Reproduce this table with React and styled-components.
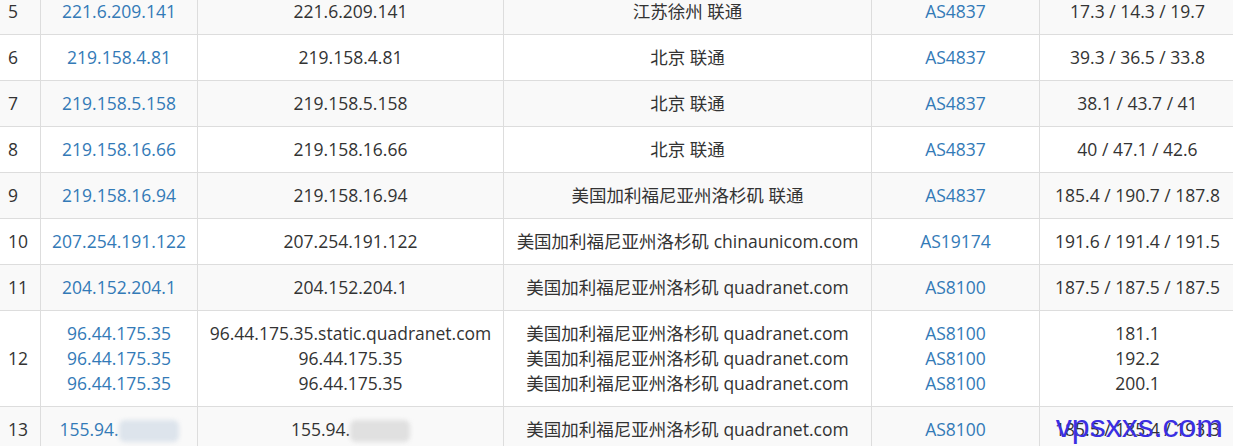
import styled, { createGlobalStyle } from "styled-components";

const GlobalStyle = createGlobalStyle`
  html, body {
    margin: 0;
    padding: 0;
    background: #fff;
    overflow: hidden;
  }
`;

const rows = [
  { no: 5, ip: ["221.6.209.141"], host: ["221.6.209.141"], loc: ["江苏徐州 联通"], as: ["AS4837"], time: ["17.3 / 14.3 / 19.7"] },
  { no: 6, ip: ["219.158.4.81"], host: ["219.158.4.81"], loc: ["北京 联通"], as: ["AS4837"], time: ["39.3 / 36.5 / 33.8"] },
  { no: 7, ip: ["219.158.5.158"], host: ["219.158.5.158"], loc: ["北京 联通"], as: ["AS4837"], time: ["38.1 / 43.7 / 41"] },
  { no: 8, ip: ["219.158.16.66"], host: ["219.158.16.66"], loc: ["北京 联通"], as: ["AS4837"], time: ["40 / 47.1 / 42.6"] },
  { no: 9, ip: ["219.158.16.94"], host: ["219.158.16.94"], loc: ["美国加利福尼亚州洛杉矶 联通"], as: ["AS4837"], time: ["185.4 / 190.7 / 187.8"] },
  { no: 10, ip: ["207.254.191.122"], host: ["207.254.191.122"], loc: ["美国加利福尼亚州洛杉矶 chinaunicom.com"], as: ["AS19174"], time: ["191.6 / 191.4 / 191.5"] },
  { no: 11, ip: ["204.152.204.1"], host: ["204.152.204.1"], loc: ["美国加利福尼亚州洛杉矶 quadranet.com"], as: ["AS8100"], time: ["187.5 / 187.5 / 187.5"] },
  {
    no: 12,
    ip: ["96.44.175.35", "96.44.175.35", "96.44.175.35"],
    host: ["96.44.175.35.static.quadranet.com", "96.44.175.35", "96.44.175.35"],
    loc: ["美国加利福尼亚州洛杉矶 quadranet.com", "美国加利福尼亚州洛杉矶 quadranet.com", "美国加利福尼亚州洛杉矶 quadranet.com"],
    as: ["AS8100", "AS8100", "AS8100"],
    time: ["181.1", "192.2", "200.1"],
  },
  { no: 13, ip: ["155.94."], host: ["155.94."], loc: ["美国加利福尼亚州洛杉矶 quadranet.com"], as: ["AS8100"], time: ["185.5 / 185.4 / 193.3"], masked: true },
];

export default function App() {
  return (
    <Page>
      <GlobalStyle />
      <Table>
        <colgroup>
          <Col $w={41} />
          <Col $w={157} />
          <Col $w={306} />
          <Col $w={368} />
          <Col $w={168} />
          <Col $w={196} />
        </colgroup>
        <tbody>
          {rows.map((r) => (
            <Row key={r.no} $odd={r.no % 2 === 1}>
              <NoCell>{r.no}</NoCell>
              <Cell>
                {r.ip.map((t, i) => (
                  <Line key={i} $link>
                    {t}
                    {r.masked && <Blur $tint="#dde4ec" />}
                  </Line>
                ))}
              </Cell>
              <Cell>
                {r.host.map((t, i) => (
                  <Line key={i}>
                    {t}
                    {r.masked && <Blur $tint="#e0e0e0" />}
                  </Line>
                ))}
              </Cell>
              <Cell>
                {r.loc.map((t, i) => (
                  <Line key={i}>{t}</Line>
                ))}
              </Cell>
              <Cell>
                {r.as.map((t, i) => (
                  <Line key={i} $link>
                    {t}
                  </Line>
                ))}
              </Cell>
              <Cell>
                {r.time.map((t, i) => (
                  <Line key={i}>{t}</Line>
                ))}
              </Cell>
            </Row>
          ))}
        </tbody>
      </Table>
      <Watermark>vpsxxs.com</Watermark>
    </Page>
  );
}

const Page = styled.div`
  position: relative;
  width: 1233px;
  height: 446px;
  overflow: hidden;
  font-family: "Open Sans", "Noto Sans CJK SC", sans-serif;
  font-size: 17.5px;
  color: #333;
`;

const Table = styled.table`
  border-collapse: collapse;
  table-layout: fixed;
  width: 1236px;
  margin: -12px 0 0 -1px;
`;

const Col = styled.col`
  width: ${(p) => p.$w}px;
`;

const Row = styled.tr`
  background: ${(p) => (p.$odd ? "#f9f9f9" : "#fff")};
`;

const Cell = styled.td`
  border: 1px solid #ddd;
  padding: 10px 4px;
  line-height: 25px;
  text-align: center;
  vertical-align: middle;
  white-space: nowrap;
`;

const NoCell = styled(Cell)`
  text-align: left;
  padding-left: 8px;
`;

const Line = styled.div`
  color: ${(p) => (p.$link ? "#337ab7" : "#333")};
`;

const Blur = styled.span`
  display: inline-block;
  width: 60px;
  height: 22px;
  vertical-align: middle;
  background: ${(p) => p.$tint};
  border-radius: 6px;
  filter: blur(2px);
`;

const Watermark = styled.div`
  position: absolute;
  right: 10px;
  bottom: 4px;
  font-family: "Liberation Sans", Arial, sans-serif;
  font-size: 32px;
  line-height: 32px;
  color: #3b2fe2;
`;
